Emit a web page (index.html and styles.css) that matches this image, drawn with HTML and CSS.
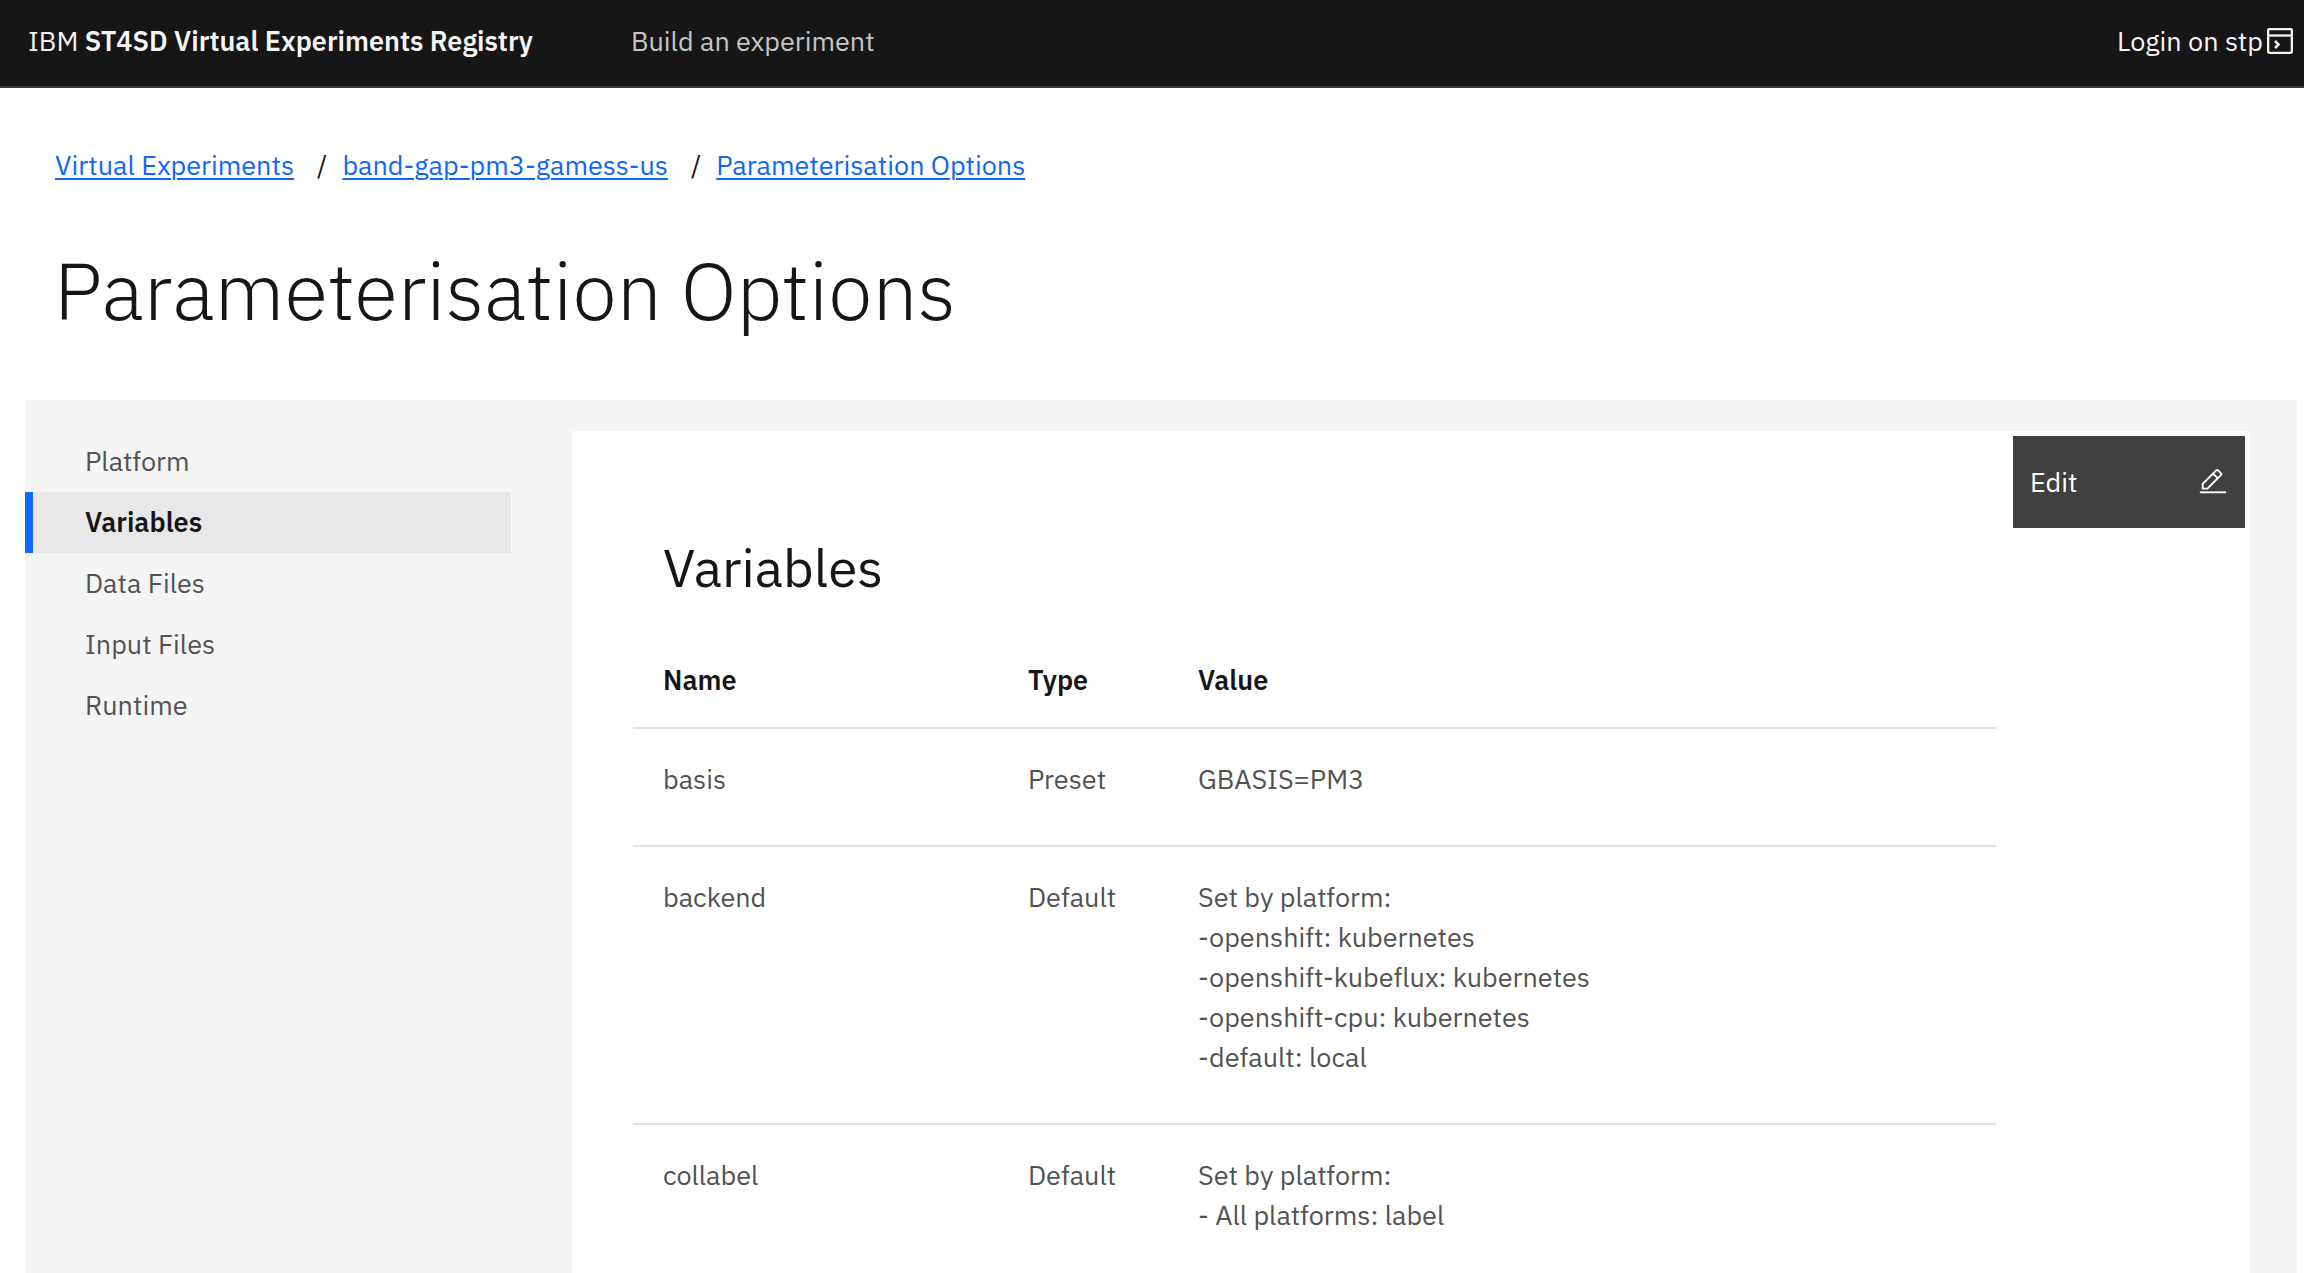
FILE: index.html
```html
<!DOCTYPE html>
<html lang="en">
<head>
  <meta charset="utf-8">
  <meta name="viewport" content="width=device-width, initial-scale=1">
  <title>Parameterisation Options</title>
  <link rel="stylesheet" href="styles.css">
</head>
<body>
  <header class="header">
    <a class="header-name" href="#">IBM <strong>ST4SD Virtual Experiments Registry</strong></a>
    <nav class="header-nav" aria-label="Main">
      <a class="header-link" href="#">Build an experiment</a>
    </nav>
    <a class="login" href="#">
      Login on stp
      <svg class="login-icon" viewBox="0 0 26 26" fill="none" stroke="currentColor" stroke-width="2.300" aria-hidden="true">
        <rect x="1.150" y="1.150" width="23.700" height="23.700" rx="1"/>
        <path d="M1 7.500h24"/>
        <path d="M8 13l3.500 3.500L8 20" stroke-width="2.500"/>
      </svg>
    </a>
  </header>

  <main class="page">
    <nav aria-label="Breadcrumb">
      <ol class="breadcrumb">
        <li><a href="#">Virtual Experiments</a></li>
        <li><a href="#">band-gap-pm3-gamess-us</a></li>
        <li><a href="#">Parameterisation Options</a></li>
      </ol>
    </nav>
    <h1 class="title">Parameterisation Options</h1>

    <div class="panel">
      <nav class="tabs" aria-label="Sections">
        <a class="tab" href="#">Platform</a>
        <a class="tab tab-selected" href="#" aria-current="page">Variables</a>
        <a class="tab" href="#">Data Files</a>
        <a class="tab" href="#">Input Files</a>
        <a class="tab" href="#">Runtime</a>
      </nav>

      <section class="card">
        <div class="toolbar">
          <button class="edit" type="button">
            Edit
            <svg class="edit-icon" viewBox="0 0 32 32" fill="currentColor" aria-hidden="true">
              <path d="M2 26h28v2H2z"/>
              <path d="M25.4 9c.8-.8.8-2 0-2.800l-3.600-3.600c-.8-.8-2-.8-2.800 0l-15 15V24h6.400l15-15zm-5-5L24 7.600l-3 3L17.400 7l3-3zM6 22v-3.600l10-10 3.600 3.600-10 10H6z"/>
            </svg>
          </button>
        </div>
        <div class="content">
          <h2 class="heading">Variables</h2>
          <table class="table">
            <thead>
              <tr>
                <th class="col-name" scope="col">Name</th>
                <th class="col-type" scope="col">Type</th>
                <th scope="col">Value</th>
              </tr>
            </thead>
            <tbody>
              <tr>
                <td>basis</td>
                <td>Preset</td>
                <td>GBASIS=PM3</td>
              </tr>
              <tr>
                <td>backend</td>
                <td>Default</td>
                <td>Set by platform:<br>-openshift: kubernetes<br>-openshift-kubeflux: kubernetes<br>-openshift-cpu: kubernetes<br>-default: local</td>
              </tr>
              <tr>
                <td>collabel</td>
                <td>Default</td>
                <td>Set by platform:<br>- All platforms: label</td>
              </tr>
            </tbody>
          </table>
        </div>
      </section>
    </div>
  </main>
</body>
</html>
```
FILE: styles.css
```css
* {
  box-sizing: border-box;
}

body {
  margin: 0;
  background: #fff;
  color: #161616;
  font: 400 27px/40px "IBM Plex Sans", Roboto, sans-serif;
}

/* Header */

.header {
  display: flex;
  align-items: center;
  height: 88px;
  padding: 0 11px 4px 28px;
  background: #161616;
  border-bottom: 2px solid #393939;
}

.header a {
  color: #f4f4f4;
  text-decoration: none;
}

.header-name strong {
  font-weight: 600;
}

.header-nav {
  flex: 1;
  padding-left: 98px;
}

.header .header-link {
  color: #c6c6c6;
}

.login {
  display: flex;
  align-items: center;
  gap: 4px;
}

.login-icon {
  width: 26px;
  height: 26px;
}

/* Page heading */

.page {
  padding: 57px 7px 0 25px;
}

.breadcrumb {
  display: flex;
  margin: 0;
  padding: 0 30px;
  list-style: none;
}

.breadcrumb li + li::before {
  content: "/";
  padding: 0 15px 0 23px;
}

.breadcrumb a {
  color: #0f67f5;
  text-decoration: underline;
  text-decoration-thickness: 2px;
  text-underline-offset: 3px;
}

.title {
  margin: 57px 0 62px;
  padding: 0 29px;
  font-size: 80px;
  font-weight: 300;
  line-height: 96px;
}

/* Panel */

.panel {
  display: grid;
  grid-template-columns: 547fr 1678fr;
  min-height: calc(100vh - 400px);
  padding: 31px 47px 0 0;
  background: #f5f5f5;
}

.tabs {
  margin-right: 61px;
}

.tab {
  display: block;
  padding: 10px 20px 11px 52px;
  border-left: 8px solid transparent;
  color: #525252;
  text-decoration: none;
}

.tab-selected {
  background: #e8e8e8;
  border-left-color: #0f6bff;
  color: #161616;
  font-weight: 600;
}

.card {
  padding: 5px;
  background: #fff;
}

.toolbar {
  display: flex;
  justify-content: flex-end;
}

.edit {
  display: flex;
  align-items: center;
  justify-content: space-between;
  width: 232px;
  height: 92px;
  padding: 0 17px;
  border: 0;
  background: #404040;
  color: #fff;
  font: inherit;
}

.edit-icon {
  width: 30px;
  height: 30px;
}

.content {
  padding: 8px 249px 0 56px;
}

.heading {
  margin: 0 0 30px;
  padding-left: 30px;
  font-size: 53px;
  font-weight: 400;
  line-height: 64px;
}

.table {
  width: 100%;
  border-collapse: separate;
  border-spacing: 0;
  table-layout: fixed;
}

.table th,
.table td {
  padding: 30px 0 46px 30px;
  border-bottom: 2px solid #e0e0e0;
  text-align: left;
  vertical-align: top;
}

.table th {
  padding-bottom: 27px;
  font-weight: 600;
}

.table td {
  color: #525252;
}

.col-name {
  width: 365px;
}

.col-type {
  width: 170px;
}
```
